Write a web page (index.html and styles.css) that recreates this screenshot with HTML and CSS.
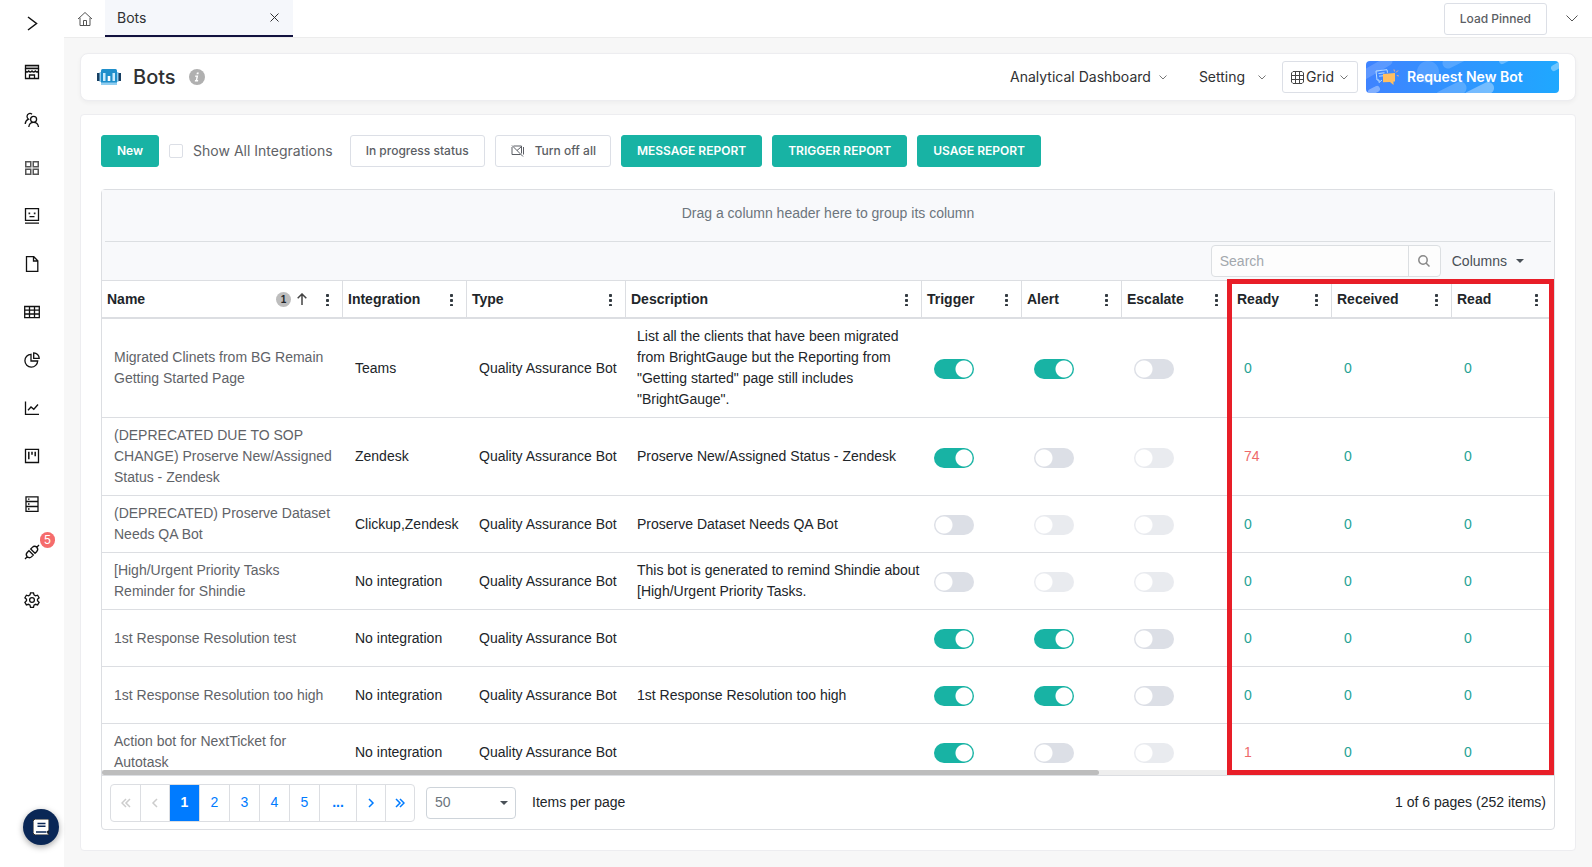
FILE: index.html
```html
<!DOCTYPE html>
<html lang="en">
<head>
<meta charset="utf-8">
<title>Bots</title>
<link rel="stylesheet" href="styles.css">
</head>
<body>
<div class="app">
  <nav class="sidebar" aria-label="Main">
    <button class="side-item" aria-label="Expand menu"><svg class="icon" viewBox="0 0 16 16"><path d="M4 1l8.500 6.500L4 14" stroke-width="1.500"/></svg></button>
    <button class="side-item" aria-label="Store"><svg class="icon" viewBox="0 0 16 16"><path d="M1.500 1.500h13v3h-13z" fill="#ccc"/><path d="M1.500 4.500v2.500q1.600 2 3.200 0 1.600 2 3.300 0 1.600 2 3.300 0 1.600 2 3.200 0V4.500M1.500 7.500v7h13v-7M5.500 14.500v-3.500h5v3.500"/></svg></button>
    <button class="side-item" aria-label="Users"><svg class="icon" viewBox="0 0 16 16"><circle cx="9.600" cy="7.300" r="3"/><path d="M4.800 15c.3-3 2-4.700 4.800-4.700s4.500 1.700 4.900 4.700M8 2.200C6.500.8 3.200 1.200 3 4.200c0 1.500.6 2.300 1.600 3C2.500 8 1.400 9.500 1.200 12"/></svg></button>
    <button class="side-item" aria-label="Apps"><svg class="icon dim" viewBox="0 0 16 16"><path d="M1.750 1.750h5v5h-5zM9.250 1.750h5v5h-5zM1.750 9.250h5v5h-5zM9.250 9.250h5v5h-5z" stroke-width="1.500"/></svg></button>
    <button class="side-item" aria-label="Bots"><svg class="icon" viewBox="0 0 16 16"><path d="M1.500.7h13v11.600h-13zM1 15.200h14M5.500 8.700h5" stroke-width="1.300"/><path d="M4.500 4.500h1.700v1.700H4.500zM9.800 4.500h1.700v1.700H9.800z" fill="#222" stroke="none"/></svg></button>
    <button class="side-item" aria-label="Documents"><svg class="icon" viewBox="0 0 16 16"><path d="M2.500.7h7.300l4 4v10.600H2.500zM9.500.7v4.300h4.300" stroke-width="1.300"/></svg></button>
    <button class="side-item" aria-label="Datasets"><svg class="icon" viewBox="0 0 16 16"><path d="M.7 2.500h14.600v11.200H.7zM.7 6.200h14.600M.7 10h14.600M5.500 2.500v11.200M10.500 2.500v11.200"/></svg></button>
    <button class="side-item" aria-label="Reports"><svg class="icon" viewBox="0 0 16 16"><path d="M7 2.300a6.400 6.400 0 1 0 6.700 6.700H7zM9.700.8v5.500h5.500A5.600 5.600 0 0 0 9.700.8z"/></svg></button>
    <button class="side-item" aria-label="Trends"><svg class="icon" viewBox="0 0 16 16"><path d="M1.500 1.500v12.800H15M4 10.200l3-3.200 2.800 2.300L14 4.500"/></svg></button>
    <button class="side-item" aria-label="Boards"><svg class="icon" viewBox="0 0 16 16"><path d="M1.500 1.300h13v13.200h-13z" stroke-width="1.300"/><path d="M4.800 3.800v7.500M8 3.800v3M11.200 3.800v4.500" stroke-width="1.500"/></svg></button>
    <button class="side-item" aria-label="Servers"><svg class="icon" viewBox="0 0 16 16"><path d="M2 .8h12v14.500H2zM2 5.500h12M2 10.500h12M4 3.200h1.500M4 8h1.500M4 13h1.500"/></svg></button>
    <button class="side-item" aria-label="Integrations, 5 notices"><svg class="icon" viewBox="0 0 16 16"><path d="M1 15l2.200-2.200M12.800 3.200L15 1M3.200 12.800c-1.400-1.600-1.100-3.200.2-4.500L5 6.700l4.300 4.300-1.600 1.600c-1.300 1.300-2.900 1.600-4.500.2zM12.800 3.200c1.400 1.600 1.100 3.200-.2 4.500L11 9.300 6.700 5l1.600-1.600c1.300-1.300 2.900-1.600 4.500-.2z"/></svg><span class="side-badge">5</span></button>
    <button class="side-item" aria-label="Settings"><svg class="icon" viewBox="0 0 16 16"><path d="M6.500.8h3l.5 2.100 1.500.9 2.100-.6 1.500 2.600-1.600 1.500v1.500l1.600 1.500-1.500 2.600-2.100-.6-1.500.9-.5 2.100h-3L6 13.200l-1.500-.9-2.100.6-1.500-2.600 1.600-1.500V7.300L.9 5.800l1.500-2.600 2.100.6L6 2.900z"/><circle cx="8" cy="8.050" r="2.400"/></svg></button>
    <button class="help" aria-label="Help"><svg class="help-icon" viewBox="0 0 16 16"><path d="M2.500 0H16v12h-1.300v2.300H16V16H2.500A2.500 2.500 0 0 1 0 13.500v-11A2.500 2.500 0 0 1 2.500 0z" fill="#fff"/><path d="M4.500 4.500h8M4.500 7.200h8M3 13h10.500" stroke="#0a2756" stroke-width="1.400"/></svg></button>
  </nav>

  <div class="main">
    <header class="topbar">
      <button class="home" aria-label="Home"><svg class="icon dim" viewBox="0 0 16 16"><path d="M1 8l7-6.500L15 8M3 6.700v7.800h10V6.700M6.500 14.500V9.500h3v5"/></svg></button>
      <div class="tab"><span>Bots</span><button class="plain" aria-label="Close tab"><svg class="close-icon" viewBox="0 0 9 9"><path d="M.5.5l8 8M8.500.5l-8 8"/></svg></button></div>
      <button class="btn pinned">Load Pinned</button>
      <button class="plain" aria-label="More tabs"><svg class="chev-lg" viewBox="0 0 12 7"><path d="M.5.5L6 6 11.500.5"/></svg></button>
    </header>

    <section class="card title-card">
      <svg class="bot-logo" viewBox="0 0 24 16"><path d="M0 4h3v8H0zM21 4h3v8h-3z" fill="#173f63"/><path d="M2.500 3h2v10h-2zM19.500 3h2v10h-2z" fill="#8fcdf0"/><rect x="4" width="16" height="16" rx="1.500" fill="#1f8fcb"/><path d="M6 4h2.500v8H6zM15.500 4H18v8h-2.500z" fill="#c9ebfc"/><path d="M10.700 7h2.600v5h-2.600z" fill="#fff"/><path d="M4 13.500h16V16H4z" fill="#8fcdf0"/></svg>
      <h1>Bots</h1>
      <svg class="info" viewBox="0 0 16 16"><circle cx="8" cy="8" r="8" fill="#b0b0b0"/><path d="M7.900 3.400h1.900l-.4 1.900H7.500zM6.300 6.400h2.900l-1 4.700h1l-.2 1.300H5.800l.2-1.300h.8l.7-3.400H6z" fill="#fff"/></svg>
      <div class="title-actions">
        <button class="menu">Analytical Dashboard <svg class="chev" viewBox="0 0 8 5"><path d="M.5.5L4 4 7.500.5"/></svg></button>
        <button class="menu">Setting <svg class="chev wide" viewBox="0 0 8 5"><path d="M.5.5L4 4 7.500.5"/></svg></button>
        <button class="btn view"><svg class="grid-icon" viewBox="0 0 13 13"><path d="M2 .5h9L12.500 2v9L11 12.500H2L.5 11V2zM.5 4.500h12M.5 8.500h12M4.500.5v12M8.500.5v12"/></svg>Grid<svg class="chev view-chev" viewBox="0 0 8 5"><path d="M.5.5L4 4 7.500.5"/></svg></button>
        <button class="request">
          <svg class="request-art" viewBox="0 0 193 32" preserveAspectRatio="none"><g stroke="#fff" stroke-linecap="round"><path d="M-2 14L22 0" stroke-width="9" opacity=".16"/><path d="M5 31l6-3" stroke-width="6" opacity=".35"/><circle cx="62" cy="11" r="11" fill="#fff" stroke="none" opacity=".14"/><path d="M82 2l18-9" stroke-width="11" opacity=".18"/><path d="M76 36l18-9" stroke-width="13" opacity=".2"/><path d="M104 36l18-9" stroke-width="12" opacity=".35"/><path d="M136 0l6-3" stroke-width="6" opacity=".3"/><path d="M188 7l7-4" stroke-width="6" opacity=".35"/></g></svg>
          <svg class="request-icon" viewBox="0 0 24 16"><path d="M7 11L4 13.500V11H2L1 2l11-1.300.5 3" fill="none" stroke="#b9dcff"/><path d="M3.500 4.500l6-.7M4 7.200l4-.4" stroke="#b9dcff"/><path d="M8 5l12-1v8.500h-1.500V16l-3.500-3-7 .2z" fill="#ffbe62" stroke="none"/><path d="M19 .5l.5 2M23 1.500l-2 2M23.800 7l-2-.5" stroke="#f4a985"/></svg>
          <span>Request New Bot</span>
        </button>
      </div>
    </section>

    <main class="card content">
      <div class="actions">
        <button class="btn primary">New</button>
        <label class="check"><input type="checkbox">Show All Integrations</label>
        <button class="btn">In progress status</button>
        <button class="btn off-btn"><svg class="off-icon" viewBox="0 0 14 12"><path d="M2.500 1h8v7.500M1 2v7.500h8.500M1 .5L12 11.500M12.500 2v7.500M6 5.500l4-3.500"/></svg>Turn off all</button>
        <button class="btn primary">MESSAGE REPORT</button>
        <button class="btn primary">TRIGGER REPORT</button>
        <button class="btn primary">USAGE REPORT</button>
      </div>

      <div class="grid">
        <div class="grid-top">
          <div class="group-drop">Drag a column header here to group its column</div>
          <div class="grid-tools">
            <div class="search"><input type="text" placeholder="Search" aria-label="Search"><button aria-label="Run search"><svg class="search-icon" viewBox="0 0 12 12"><circle cx="5" cy="5" r="4.200"/><path d="M8 8l3.500 3.500"/></svg></button></div>
            <button class="columns">Columns <span class="caret"></span></button>
          </div>
        </div>
        <div class="table-wrap">
          <table>
            <colgroup><col class="c-name"><col class="c-int"><col class="c-type"><col><col class="c-sm"><col class="c-sm"><col class="c-md"><col class="c-sm"><col class="c-lg"><col class="c-sm"></colgroup>
            <thead><tr>
              <th><div class="th">Name<span class="sort-no">1</span><svg class="sort" viewBox="0 0 10 12"><path d="M5 12V1M.7 5.300L5 1l4.300 4.300"/></svg><button class="dots" aria-label="Name menu"></button></div></th>
              <th><div class="th">Integration<button class="dots" aria-label="Integration menu"></button></div></th>
              <th><div class="th">Type<button class="dots" aria-label="Type menu"></button></div></th>
              <th><div class="th">Description<button class="dots" aria-label="Description menu"></button></div></th>
              <th><div class="th">Trigger<button class="dots" aria-label="Trigger menu"></button></div></th>
              <th><div class="th">Alert<button class="dots" aria-label="Alert menu"></button></div></th>
              <th><div class="th">Escalate<button class="dots" aria-label="Escalate menu"></button></div></th>
              <th><div class="th">Ready<button class="dots" aria-label="Ready menu"></button></div></th>
              <th><div class="th">Received<button class="dots" aria-label="Received menu"></button></div></th>
              <th><div class="th">Read<button class="dots" aria-label="Read menu"></button></div></th>
            </tr></thead>
            <tbody>
              <tr><td class="name"><a href="#">Migrated Clinets from BG Remain Getting Started Page</a></td><td>Teams</td><td>Quality Assurance Bot</td><td class="desc">List all the clients that have been migrated from BrightGauge but the Reporting from "Getting started" page still includes "BrightGauge".</td><td><input type="checkbox" class="switch" aria-label="Trigger" checked></td><td><input type="checkbox" class="switch" aria-label="Alert" checked></td><td><input type="checkbox" class="switch" aria-label="Escalate"></td><td class="num">0</td><td class="num">0</td><td class="num">0</td></tr>
              <tr><td class="name"><a href="#">(DEPRECATED DUE TO SOP CHANGE) Proserve New/Assigned Status - Zendesk</a></td><td>Zendesk</td><td>Quality Assurance Bot</td><td class="desc">Proserve New/Assigned Status - Zendesk</td><td><input type="checkbox" class="switch" aria-label="Trigger" checked></td><td><input type="checkbox" class="switch" aria-label="Alert"></td><td><input type="checkbox" class="switch" aria-label="Escalate" disabled></td><td class="num hot">74</td><td class="num">0</td><td class="num">0</td></tr>
              <tr><td class="name"><a href="#">(DEPRECATED) Proserve Dataset Needs QA Bot</a></td><td>Clickup,Zendesk</td><td>Quality Assurance Bot</td><td class="desc">Proserve Dataset Needs QA Bot</td><td><input type="checkbox" class="switch" aria-label="Trigger"></td><td><input type="checkbox" class="switch" aria-label="Alert" disabled></td><td><input type="checkbox" class="switch" aria-label="Escalate" disabled></td><td class="num">0</td><td class="num">0</td><td class="num">0</td></tr>
              <tr><td class="name"><a href="#">[High/Urgent Priority Tasks Reminder for Shindie</a></td><td>No integration</td><td>Quality Assurance Bot</td><td class="desc">This bot is generated to remind Shindie about [High/Urgent Priority Tasks.</td><td><input type="checkbox" class="switch" aria-label="Trigger"></td><td><input type="checkbox" class="switch" aria-label="Alert" disabled></td><td><input type="checkbox" class="switch" aria-label="Escalate" disabled></td><td class="num">0</td><td class="num">0</td><td class="num">0</td></tr>
              <tr><td class="name"><a href="#">1st Response Resolution test</a></td><td>No integration</td><td>Quality Assurance Bot</td><td class="desc"></td><td><input type="checkbox" class="switch" aria-label="Trigger" checked></td><td><input type="checkbox" class="switch" aria-label="Alert" checked></td><td><input type="checkbox" class="switch" aria-label="Escalate"></td><td class="num">0</td><td class="num">0</td><td class="num">0</td></tr>
              <tr><td class="name"><a href="#">1st Response Resolution too high</a></td><td>No integration</td><td>Quality Assurance Bot</td><td class="desc">1st Response Resolution too high</td><td><input type="checkbox" class="switch" aria-label="Trigger" checked></td><td><input type="checkbox" class="switch" aria-label="Alert" checked></td><td><input type="checkbox" class="switch" aria-label="Escalate"></td><td class="num">0</td><td class="num">0</td><td class="num">0</td></tr>
              <tr><td class="name"><a href="#">Action bot for NextTicket for Autotask</a></td><td>No integration</td><td>Quality Assurance Bot</td><td class="desc"></td><td><input type="checkbox" class="switch" aria-label="Trigger" checked></td><td><input type="checkbox" class="switch" aria-label="Alert"></td><td><input type="checkbox" class="switch" aria-label="Escalate" disabled></td><td class="num hot">1</td><td class="num">0</td><td class="num">0</td></tr>
            </tbody>
          </table>
          <div class="highlight"></div>
        </div>
        <div class="scrollbar"><div class="thumb"></div></div>
        <footer class="pager">
          <div class="pages">
            <button class="arrow" disabled aria-label="First page"><svg class="pg-icon" viewBox="0 0 10 10"><path d="M5 1L1 5l4 4M9 1L5 5l4 4"/></svg></button>
            <button class="arrow" disabled aria-label="Previous page"><svg class="pg-icon" viewBox="0 0 10 10"><path d="M7 1L3 5l4 4"/></svg></button>
            <button class="current">1</button><button>2</button><button>3</button><button>4</button><button>5</button><button class="more">...</button>
            <button class="arrow" aria-label="Next page"><svg class="pg-icon" viewBox="0 0 10 10"><path d="M3 1l4 4-4 4"/></svg></button>
            <button class="arrow" aria-label="Last page"><svg class="pg-icon" viewBox="0 0 10 10"><path d="M1 1l4 4-4 4M5 1l4 4-4 4"/></svg></button>
          </div>
          <div class="size"><select id="page-size"><option>50</option></select><span class="caret"></span></div>
          <label for="page-size">Items per page</label>
          <span class="summary">1 of 6 pages (252 items)</span>
        </footer>
      </div>
    </main>
  </div>
</div>
</body>
</html>
```
FILE: styles.css
```css
* { box-sizing: border-box; }
body {
  margin: 0;
  font: 14px/20px Inter, "Liberation Sans", sans-serif;
  color: #303133;
  background: #f7f7f7;
}
button, input, select { font: inherit; color: inherit; margin: 0; }
button { border: 0; padding: 0; background: none; cursor: pointer; }
svg { display: block; fill: none; stroke: currentColor; flex: none; }

.app { display: flex; height: 100vh; }

/* Sidebar */
.sidebar {
  width: 64px;
  flex: none;
  background: #fff;
  display: flex;
  flex-direction: column;
  align-items: center;
  color: #111;
}
.side-item {
  position: relative;
  width: 64px;
  height: 48px;
  display: flex;
  align-items: center;
  justify-content: center;
}
.icon { width: 16px; height: 16px; }
.side-item .icon { stroke-width: 1.3; }
.dim { color: #555; }
.side-badge {
  position: absolute;
  top: 4px;
  right: 9px;
  width: 15px;
  height: 16px;
  border-radius: 8px;
  background: #f56c6c;
  color: #fff;
  font-size: 12px;
  line-height: 16px;
}
.help {
  width: 36px;
  height: 36px;
  margin: auto 5px 22px auto;
  border-radius: 50%;
  background: #0a2756;
  box-shadow: 0 2px 6px rgba(0, 0, 0, .35);
  display: flex;
  align-items: center;
  justify-content: center;
}
.help-icon { width: 16px; height: 16px; }

/* Top bar */
.main { flex: 1; min-width: 0; display: flex; flex-direction: column; }
.topbar {
  display: flex;
  align-items: center;
  height: 38px;
  flex: none;
  background: #fff;
  border-bottom: 1px solid #ececec;
  padding-right: 14px;
  color: #555;
}
.home { width: 41px; height: 36px; display: flex; align-items: center; justify-content: center; }
.tab {
  width: 188px;
  height: 37px;
  padding: 0 14px 0 12px;
  background: #f5f7fb;
  border-bottom: 2px solid #12123f;
  color: #303133;
  display: flex;
  align-items: center;
  justify-content: space-between;
}
.close-icon { width: 9px; height: 9px; }
.pinned { margin: 0 19px 0 auto; height: 28px; }
.chev-lg { width: 12px; height: 7px; }

/* Cards */
.card {
  background: #fff;
  border: 1px solid #ededf0;
  border-radius: 4px;
  margin: 0 16px 0 16px;
}
.title-card {
  margin-top: 15px;
  height: 48px;
  flex: none;
  padding: 0 16px;
  border-radius: 8px;
  box-shadow: 0 2px 4px rgba(0, 0, 0, .04);
  display: flex;
  align-items: center;
}
.bot-logo { width: 24px; height: 16px; stroke: none; }
h1 { margin: 0 13px 0 12px; font-size: 20px; font-weight: 500; line-height: 24px; }
.info { width: 16px; height: 16px; stroke: none; }
.title-actions { margin-left: auto; display: flex; align-items: center; }
.menu { display: flex; align-items: center; margin-right: 32px; }
.menu + .menu { margin-right: 16px; }
.chev { width: 8px; height: 5px; color: #777; margin-left: 8px; }
.wide { margin-left: 13px; }

.btn {
  height: 32px;
  padding: 0 15px;
  border: 1px solid #dcdfe6;
  border-radius: 3px;
  background: #fff;
  color: #5b5e64;
  font-size: 12px;
  font-weight: 500;
  white-space: nowrap;
}
.primary { background: #18b3a4; border-color: #18b3a4; color: #fff; font-weight: 600; }
.view { display: flex; align-items: center; padding: 0 9px 0 8px; font-size: 14px; font-weight: 400; color: #303133; }
.grid-icon { width: 13px; height: 13px; margin-right: 2px; color: #444; }
.view-chev { margin-left: 6px; }
.request {
  position: relative;
  overflow: hidden;
  width: 193px;
  height: 32px;
  margin-left: 8px;
  padding-left: 9px;
  border-radius: 4px;
  background: linear-gradient(90deg, #3f83ff, #1fa8ff);
  color: #fff;
  font-weight: 600;
  display: flex;
  align-items: center;
  gap: 8px;
}
.request span, .request-icon { position: relative; }
.request-art { position: absolute; inset: 0; width: 100%; height: 100%; }
.request-icon { width: 24px; height: 16px; }

/* Content */
.content {
  flex: 1;
  min-height: 0;
  margin-top: 13px;
  margin-bottom: 16px;
  padding: 20px;
  display: flex;
  flex-direction: column;
}
.actions { display: flex; align-items: center; gap: 10px; }
.check { display: flex; align-items: center; gap: 10px; color: #606266; margin-right: 7px; }
.check input {
  appearance: none;
  width: 14px;
  height: 14px;
  border: 1px solid #dcdfe6;
  border-radius: 2px;
  background: #fff;
}
.off-btn { display: flex; align-items: center; gap: 10px; padding-right: 14px; }
.off-icon { width: 14px; height: 12px; }

/* Data grid */
.grid {
  flex: 1;
  min-height: 0;
  margin-top: 22px;
  border: 1px solid #dcdee2;
  border-radius: 4px;
  display: flex;
  flex-direction: column;
  font-family: "Liberation Sans", sans-serif;
  line-height: 21px;
  color: #212529;
}
.grid-top { background: #f8f9fb; }
.group-drop {
  height: 52px;
  margin: 0 3px;
  padding-top: 13px;
  border-bottom: 1px solid #dcdfe2;
  text-align: center;
  color: #6c757d;
}
.grid-tools { display: flex; justify-content: flex-end; height: 38px; padding: 3px 30px 3px 0; }
.search {
  display: flex;
  width: 230px;
  border: 1px solid #dcdfe2;
  border-radius: 4px;
  background: #fdfdfd;
}
.search input { flex: 1; min-width: 0; border: 0; padding: 0 8px; background: none; outline: 0; }
.search input::placeholder { color: #a3a8ad; }
.search button { width: 32px; border-left: 1px solid #dcdfe2; color: #888; display: flex; align-items: center; justify-content: center; }
.search-icon { width: 12px; height: 12px; stroke-width: 1.5; }
.columns { display: flex; align-items: center; gap: 9px; margin-left: 11px; color: #495057; }
.caret { width: 0; border: 4px solid transparent; border-top-color: #495057; border-bottom: 0; }

.table-wrap {
  position: relative;
  flex: 1;
  min-height: 0;
  padding-right: 3px;
  border-top: 1px solid #dcdee2;
  overflow: clip;
  overflow-clip-margin: 5px;
}
table { width: 100%; table-layout: fixed; border-collapse: separate; border-spacing: 0; }
.c-name { width: 240px; }
.c-int { width: 124px; }
.c-type { width: 159px; }
.c-sm { width: 100px; }
.c-md { width: 110px; }
.c-lg { width: 120px; }
th { height: 38px; padding: 0; border-bottom: 2px solid #dcdee2; text-align: left; }
th + th { border-left: 1px solid #dcdee2; }
.th { display: flex; align-items: center; padding: 0 13px 0 5px; }
.dots {
  width: 3px;
  height: 13px;
  margin-left: auto;
  background: radial-gradient(circle, #333a40 1px, #8d9296 2px, transparent 2px) 0 0 / 3px 5px;
}
.sort-no {
  margin-left: auto;
  width: 15px;
  height: 15px;
  border-radius: 50%;
  background: #bdbdbd;
  font-size: 10px;
  line-height: 15px;
  text-align: center;
}
.sort { width: 10px; height: 12px; margin: 0 19px 0 6px; color: #444; stroke-width: 1.5; }
.sort + .dots { margin-left: 0; }
tbody tr { height: 57px; }
td { padding: 7px 0 7px 13px; border-bottom: 1px solid #dcdee2; vertical-align: middle; }
td.name { padding: 7px 4px 7px 12px; }
td.desc { padding-left: 12px; }
td a { color: #5f6368; text-decoration: none; }
td.num { color: #26a295; }
td.hot { color: #ee6a6a; }
.switch {
  appearance: none;
  display: block;
  width: 40px;
  height: 20px;
  margin-top: 2px;
  border-radius: 10px;
  background: radial-gradient(circle at 10px 10px, #fff 8px, transparent 9px) #dcdfe6;
}
.switch:checked { background: radial-gradient(circle at 30px 10px, #fff 8px, transparent 9px) #18b3a4; }
.switch:disabled { opacity: .6; }
.highlight {
  position: absolute;
  top: -2px;
  right: 0;
  bottom: -5px;
  width: 327px;
  border: 5px solid #e81e28;
  pointer-events: none;
}
.scrollbar { height: 6px; background: #eee; border-bottom: 1px solid #dcdee2; }
.thumb { width: 997px; max-width: 69%; height: 5px; border-radius: 3px; background: #bdbdbd; }

/* Pager */
.pager { display: flex; align-items: center; height: 53px; padding: 0 8px; }
.pages { display: flex; border: 1px solid #dcdee2; border-radius: 4px; overflow: hidden; height: 38px; color: #007bff; }
.pages button { width: 30px; display: flex; align-items: center; justify-content: center; }
.pages button + button { border-left: 1px solid #dcdee2; }
.pages .arrow { width: 29px; }
.pages .more { width: 37px; font-weight: 700; }
.pages .current { background: #007bff; color: #fff; font-weight: 700; }
.pages button:disabled { color: #ccc; }
.pg-icon { width: 10px; height: 10px; stroke-width: 1.5; }
.size { position: relative; margin: 0 16px 0 11px; }
.size select {
  appearance: none;
  width: 90px;
  height: 32px;
  padding: 0 8px;
  border: 1px solid #ced4da;
  border-radius: 4px;
  background: #fff;
  color: #6c757d;
}
.size .caret { position: absolute; right: 8px; top: 14px; }
.summary { margin-left: auto; }
```
